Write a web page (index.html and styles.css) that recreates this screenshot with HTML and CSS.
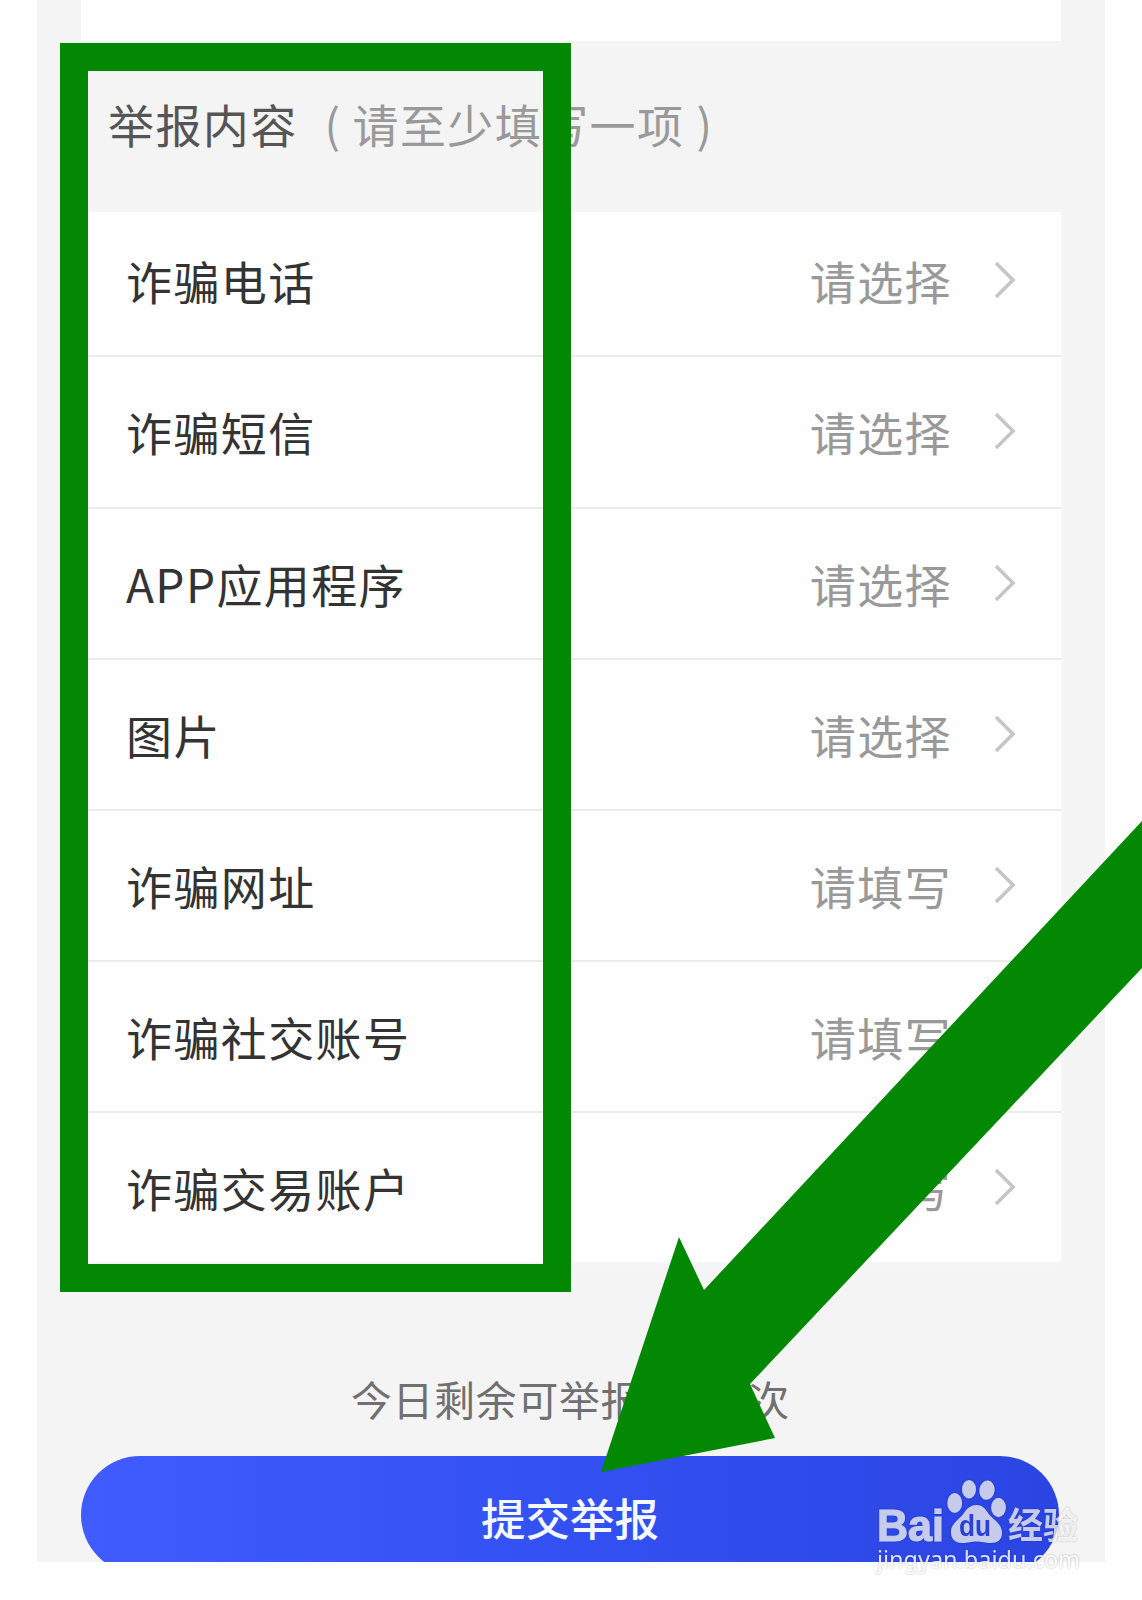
FILE: index.html
```html
<!DOCTYPE html>
<html lang="zh-CN">
  <head>
    <meta charset="UTF-8" />
    <meta name="viewport" content="width=device-width, initial-scale=1.0" />
    <title>举报内容</title>
    <link rel="stylesheet" href="styles.css">
  </head>
  <body>
    <div class="page">
      <div class="prev-card"></div>

      <h1 class="section-title">
        举报内容<span class="hint"><span class="paren-open">(</span>请至少填写一项<span class="paren-close">)</span></span>
      </h1>

      <div class="report-list">
        <div class="row">
          <span class="label">诈骗电话</span>
          <span class="value">请选择</span>
          <svg class="arrow-right" viewBox="0 0 22 38"><path d="M2 2L19 19L2 36" /></svg>
        </div>
        <div class="row">
          <span class="label">诈骗短信</span>
          <span class="value">请选择</span>
          <svg class="arrow-right" viewBox="0 0 22 38"><path d="M2 2L19 19L2 36" /></svg>
        </div>
        <div class="row">
          <span class="label">APP应用程序</span>
          <span class="value">请选择</span>
          <svg class="arrow-right" viewBox="0 0 22 38"><path d="M2 2L19 19L2 36" /></svg>
        </div>
        <div class="row">
          <span class="label">图片</span>
          <span class="value">请选择</span>
          <svg class="arrow-right" viewBox="0 0 22 38"><path d="M2 2L19 19L2 36" /></svg>
        </div>
        <div class="row">
          <span class="label">诈骗网址</span>
          <span class="value">请填写</span>
          <svg class="arrow-right" viewBox="0 0 22 38"><path d="M2 2L19 19L2 36" /></svg>
        </div>
        <div class="row">
          <span class="label">诈骗社交账号</span>
          <span class="value">请填写</span>
          <svg class="arrow-right" viewBox="0 0 22 38"><path d="M2 2L19 19L2 36" /></svg>
        </div>
        <div class="row">
          <span class="label">诈骗交易账户</span>
          <span class="value">请填写</span>
          <svg class="arrow-right" viewBox="0 0 22 38"><path d="M2 2L19 19L2 36" /></svg>
        </div>
      </div>

      <p class="remaining"><span>今日剩余可举报</span><span>次</span></p>
      <button class="submit-btn" type="button">提交举报</button>
    </div>

    <!-- 标注框和箭头 -->
    <div class="mark-box"></div>
    <svg class="mark-arrow" viewBox="0 0 542 660">
      <polygon points="1,652 79,417 104,470 542,1 542,148 150,564 175,618" />
    </svg>

    <svg class="watermark" viewBox="0 0 212 104">
      <g class="wm-logo">
        <text class="wm-bai" x="3" y="61" textLength="67" lengthAdjust="spacingAndGlyphs">Bai</text>
        <ellipse cx="80.700" cy="23" rx="7.400" ry="10" />
        <ellipse cx="95" cy="9.200" rx="7" ry="9.200" />
        <ellipse cx="113" cy="10.200" rx="7.600" ry="9.700" transform="rotate(8 113 10)" />
        <ellipse cx="124.500" cy="27.500" rx="7.400" ry="9.700" />
        <path d="M102.500 25C108 25 111 28 114 33C118 39 128 43 128 53C128 60 123 63 117 63C111 63 108 61.500 102.500 61.500C97 61.500 94 63 88 63C81 63 77 59 77 52C77 43 86 39 90 33C93 28 97 25 102.500 25Z" />
        <text class="wm-du" x="85" y="56" textLength="32" lengthAdjust="spacingAndGlyphs">du</text>
        <text class="wm-cn" x="134" y="58.500" textLength="70" lengthAdjust="spacingAndGlyphs">经验</text>
      </g>
      <text class="wm-url" x="3" y="88" textLength="203" lengthAdjust="spacingAndGlyphs">jingyan.baidu.com</text>
    </svg>
  </body>
</html>
```

FILE: styles.css
```css
* {
  box-sizing: border-box;
}

body {
  position: relative;
  width: 1142px;
  height: 1600px;
  margin: 0;
  background: #fefefe;
  font-family: "Noto Sans CJK SC", "Noto Sans", sans-serif;
  overflow: hidden;
}

.page {
  width: 1068px;
  height: 1562px;
  margin-left: 37px;
  padding: 0 44px;
  background: #f4f4f4;
  overflow: hidden;
}

.prev-card {
  height: 41px;
  background: #fefefe;
}

.section-title {
  display: flex;
  align-items: center;
  height: 171px;
  margin: 0;
  padding: 0 0 8px 27px;
  font-size: 46px;
  font-weight: 400;
  letter-spacing: 1.4px;
  color: #555;
}

.hint {
  color: #999;
}

.paren-open {
  margin: 0 11px 0 27px;
}

.paren-close {
  margin-left: 12px;
}

.report-list {
  background: #fefefe;
  box-shadow: 0 0 6px #fafafa;
}

.row {
  display: flex;
  align-items: center;
  height: 151.2px;
  padding: 0 45px 1px 45px;
  border-bottom: 2px solid #ebebeb;
  font-size: 46px;
  letter-spacing: 1.4px;
  line-height: 1;
}

.row:first-child {
  height: 145.4px;
  padding-bottom: 7px;
}

.row:last-child {
  height: 149px;
  border-bottom: none;
}

.label {
  flex: 1;
  color: #333;
}

.value {
  color: #999;
}

.arrow-right {
  width: 22px;
  height: 38px;
  margin-left: 42px;
  fill: none;
  stroke: #c6c6c6;
  stroke-width: 3.6;
}

.remaining {
  display: flex;
  justify-content: space-between;
  width: 439px;
  margin: 116px 0 0 270px;
  font-size: 40.8px;
  letter-spacing: 0.8px;
  line-height: 42px;
  color: #707070;
}

.submit-btn {
  display: block;
  width: 978px;
  height: 118px;
  margin-top: 36px;
  padding: 2px 0 0;
  border: none;
  border-radius: 59px;
  background: linear-gradient(to right, #405cff, #3350f2 50%, #2b45e3);
  color: #f4f9ff;
  font-family: inherit;
  font-size: 44.5px;
  font-weight: 500;
}

.mark-box {
  position: absolute;
  left: 60px;
  top: 43px;
  width: 511px;
  height: 1249px;
  border: 28px solid #028802;
}

.mark-arrow {
  position: absolute;
  left: 600px;
  top: 820px;
  width: 542px;
  height: 660px;
  fill: #028802;
}

.watermark {
  position: absolute;
  left: 874px;
  top: 1480px;
  width: 212px;
  height: 104px;
  filter: drop-shadow(0 0 1px rgba(0, 0, 0, 0.3));
}

.wm-logo {
  fill: #fff;
  opacity: 0.74;
}

.wm-bai {
  font: bold 45px "Liberation Sans", sans-serif;
  stroke: #fff;
  stroke-width: 1.2;
}

.wm-du {
  font: bold 29px "Liberation Sans", sans-serif;
  fill: #2c46e6;
}

.wm-cn {
  font-size: 36px;
  font-weight: 700;
}

.wm-url {
  font: 24px "Noto Sans", sans-serif;
  fill: #fff;
  opacity: 0.85;
}
```
